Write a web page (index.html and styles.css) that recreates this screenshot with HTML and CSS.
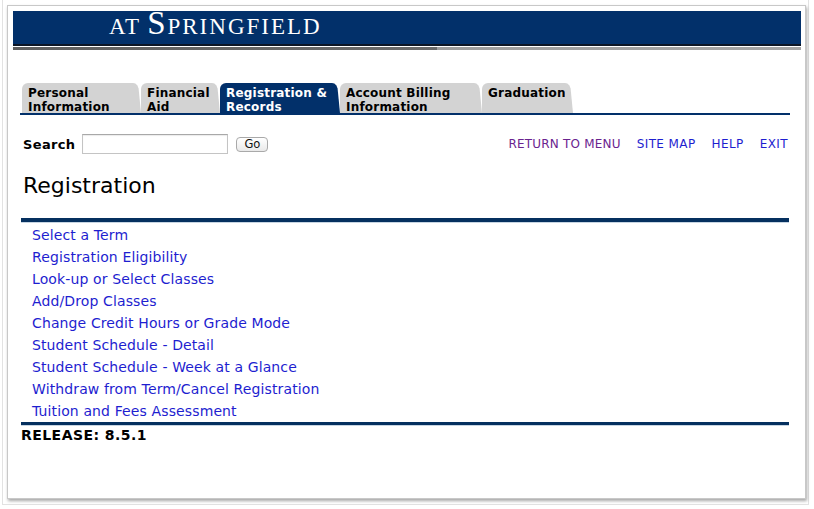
FILE: index.html
```html
<!DOCTYPE html>
<html lang="en">
<head>
<meta charset="utf-8">
<title>Registration</title>
<link rel="stylesheet" href="styles.css">
</head>
<body>
<div class="outer">
  <div class="window">
    <div class="banner">
      <div class="title"><span class="sc">AT</span> <span class="big">S</span><span class="sc">PRINGFIELD</span></div>
    </div>
    <div class="banner-rule"></div>

    <nav class="tabs">
      <a class="tab t1" href="#">Personal<br>Information</a>
      <a class="tab t2" href="#">Financial<br>Aid</a>
      <a class="tab t3 active" href="#">Registration &amp;<br>Records</a>
      <a class="tab t4" href="#">Account Billing<br>Information</a>
      <a class="tab t5" href="#">Graduation</a>
    </nav>

    <main class="content">
      <div class="searchrow">
        <label class="search-label" for="q">Search</label>
        <input class="search-input" id="q" type="text">
        <button class="go" type="button">Go</button>
        <div class="toplinks">
          <a class="visited" href="#">RETURN TO MENU</a>
          <a href="#">SITE MAP</a>
          <a href="#">HELP</a>
          <a href="#">EXIT</a>
        </div>
      </div>

      <h1 class="heading">Registration</h1>
      <div class="rule rule-top"></div>

      <ul class="menu">
        <li><a href="#">Select a Term</a></li>
        <li><a href="#">Registration Eligibility</a></li>
        <li><a href="#">Look-up or Select Classes</a></li>
        <li><a href="#">Add/Drop Classes</a></li>
        <li><a href="#">Change Credit Hours or Grade Mode</a></li>
        <li><a href="#">Student Schedule - Detail</a></li>
        <li><a href="#">Student Schedule - Week at a Glance</a></li>
        <li><a href="#">Withdraw from Term/Cancel Registration</a></li>
        <li><a href="#">Tuition and Fees Assessment</a></li>
      </ul>

      <div class="rule rule-bottom"></div>
      <div class="release">RELEASE: 8.5.1</div>
    </main>
  </div>
</div>
</body>
</html>
```

FILE: styles.css
```css
html, body {
  margin: 0;
  padding: 0;
  background: #ffffff;
}

body {
  font-family: "DejaVu Sans", Verdana, sans-serif;
  color: #000;
}

.outer {
  width: 807px;
  height: 505px;
  margin-left: 2px;
  border: 1px solid #e2e2e2;
  border-top: none;
  padding: 5px 0 0 4px;
  box-sizing: border-box;
}

.window {
  width: 799px;
  height: 494px;
  box-sizing: border-box;
  border: 1px solid #c8c8c8;
  box-shadow: 1px 2px 3px rgba(0, 0, 0, 0.35);
  background: #fff;
  padding: 5px 4px 0 5px;
}

/* Banner */
.banner {
  height: 33px;
  background: #02306a;
  border-bottom: 2px solid #0c1626;
}

.title {
  font-family: "Liberation Serif", "Times New Roman", serif;
  color: #ffffff;
  line-height: 24px;
  padding: 0 0 0 96px;
  letter-spacing: 2px;
  white-space: nowrap;
}

.title .sc {
  font-size: 23px;
}

.title .big {
  font-size: 33px;
}

.banner-rule {
  margin-top: 1px;
  height: 3px;
  background: linear-gradient(to right, #5f5f5f 0, #6a6a6a 424px, #9d9d9d 424px, #a4a4a4 100%);
}

/* Tabs */
.tabs {
  display: flex;
  align-items: flex-end;
  margin: 33px 0 0 7px;
  width: 770px;
  padding-left: 2px;
  box-sizing: border-box;
  border-bottom: 2px solid #02306a;
}

.tab {
  position: relative;
  display: block;
  height: 30px;
  box-sizing: border-box;
  padding: 3px 0 0 6px;
  margin-right: 8px;
  background: #d3d3d3;
  color: #000;
  text-decoration: none;
  font-weight: bold;
  font-size: 12px;
  line-height: 14px;
  letter-spacing: 0.2px;
  white-space: nowrap;
  border-top-left-radius: 6px;
}

.tab::after {
  content: "";
  position: absolute;
  top: 0;
  right: -8px;
  width: 8px;
  height: 100%;
  background: inherit;
  clip-path: polygon(0 0, 30% 2%, 55% 8%, 70% 18%, 100% 100%, 0 100%);
}

.tab.active {
  background: #02306a;
  color: #ffffff;
}

.t1 { width: 111px; }
.t2 { width: 71px; }
.t3 { width: 112px; }
.t4 { width: 134px; }
.t5 { width: 83px; }

/* Content */
.content {
  margin-left: 8px;
  width: 768px;
}

.searchrow {
  display: flex;
  align-items: center;
  height: 20px;
  margin-top: 19px;
  padding-left: 2px;
}

.search-label {
  font-weight: bold;
  font-size: 13px;
  letter-spacing: 0.35px;
}

.search-input {
  width: 146px;
  height: 20px;
  box-sizing: border-box;
  margin: 0 0 0 7px;
  padding: 0 3px;
  border: 1px solid #c4c4c4;
  border-top-color: #a8a8a8;
  box-shadow: inset 0 1px 1px rgba(0, 0, 0, 0.08);
  background: #fff;
}

.go {
  width: 32px;
  height: 15px;
  margin-left: 8px;
  padding: 0;
  box-sizing: border-box;
  border: 1px solid #a9a9a9;
  border-radius: 4px;
  background: linear-gradient(#ffffff, #e9e9e9);
  font-family: "DejaVu Sans", sans-serif;
  font-size: 11.5px;
  line-height: 13px;
  color: #111;
}

.toplinks {
  display: flex;
  gap: 16px;
  margin-left: auto;
  padding-right: 1px;
  font-size: 12px;
  letter-spacing: 0.4px;
}

.toplinks a {
  color: #1e1ed0;
  text-decoration: none;
}

.toplinks a.visited {
  color: #6a238f;
  letter-spacing: 0.2px;
}

.heading {
  margin: 19px 0 0 2px;
  font-size: 22px;
  font-weight: normal;
  line-height: 26px;
}

.rule {
  background: #05305f;
  border-bottom: 1px solid #c7d5e2;
}

.rule-top {
  margin-top: 19px;
  height: 4px;
}

.rule-bottom {
  height: 3px;
}

.menu {
  list-style: none;
  margin: 1px 0 0;
  padding: 0 0 0 11px;
}

.menu li {
  font-size: 14px;
  line-height: 22px;
  letter-spacing: 0.12px;
}

.menu a {
  color: #1e1ed0;
  text-decoration: none;
}

.release {
  margin-top: 1px;
  font-weight: bold;
  font-size: 14px;
  line-height: 16px;
  letter-spacing: 0.45px;
}
```
